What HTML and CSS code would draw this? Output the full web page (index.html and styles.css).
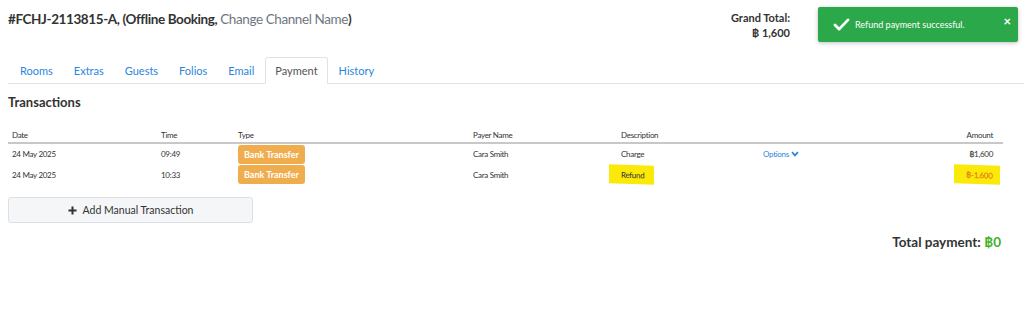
FILE: index.html
```html
<!DOCTYPE html>
<html>
<head>
<meta charset="utf-8">
<link rel="stylesheet" href="styles.css">
</head>
<body>
<div class="page">
  <header class="top">
    <h1 class="title">#FCHJ-2113815-A, (Offline Booking, <span class="channel">Change Channel Name</span>)</h1>
    <div class="grand">
      <div>Grand Total:</div>
      <div>฿ 1,600</div>
    </div>
  </header>

  <ul class="tabs">
    <li><a>Rooms</a></li>
    <li><a>Extras</a></li>
    <li><a>Guests</a></li>
    <li><a>Folios</a></li>
    <li><a>Email</a></li>
    <li class="active"><a>Payment</a></li>
    <li><a>History</a></li>
  </ul>

  <h2 class="section">Transactions</h2>

  <table class="tx">
    <colgroup>
      <col class="c-date"><col class="c-time"><col class="c-type"><col class="c-payer"><col class="c-desc"><col class="c-opt"><col>
    </colgroup>
    <thead>
      <tr><th>Date</th><th>Time</th><th>Type</th><th>Payer Name</th><th>Description</th><th></th><th class="amt">Amount</th></tr>
    </thead>
    <tbody>
      <tr>
        <td>24 May 2025</td><td>09:49</td><td><span class="badge">Bank Transfer</span></td><td>Cara Smith</td><td>Charge</td>
        <td><a class="opts">Options <svg width="8" height="6" viewBox="0 0 8 6"><path d="M1 1.2 L4 4.4 L7 1.2" fill="none" stroke="#2b86e0" stroke-width="1.7"/></svg></a></td>
        <td class="amt">฿1,600</td>
      </tr>
      <tr>
        <td>24 May 2025</td><td>10:33</td><td><span class="badge">Bank Transfer</span></td><td>Cara Smith</td><td><span class="hl hl-desc">Refund</span></td>
        <td></td>
        <td class="amt"><span class="hl hl-amt neg">฿-1,600</span></td>
      </tr>
    </tbody>
  </table>

  <button class="add"><svg width="9" height="9" viewBox="0 0 10 10"><path d="M5 0.5 V9.5 M0.5 5 H9.5" stroke="#333" stroke-width="2.3"/></svg> Add Manual Transaction</button>

  <div class="total">Total payment: <span class="zero">฿0</span></div>
</div>

<div class="toast">
  <svg class="check" width="17" height="13" viewBox="0 0 18 14"><path d="M2 7.5 L6.5 12 L16 2" fill="none" stroke="#fff" stroke-width="3" stroke-linecap="round" stroke-linejoin="round"/></svg>
  <span class="msg">Refund payment successful.</span>
  <span class="close">×</span>
</div>
</body>
</html>
```

FILE: styles.css
```css
* { box-sizing: border-box; }
html, body { margin: 0; padding: 0; background: #fff; }
body {
  font-family: "Lato", "Open Sans", "Liberation Sans", sans-serif;
  color: #333;
  width: 1024px;
  height: 311px;
  overflow: hidden;
  position: relative;
}
.page { padding: 0 0 0 8px; }

.top {
  display: flex;
  justify-content: space-between;
  align-items: flex-start;
  height: 57px;
  padding-right: 234px;
}
.title {
  margin: 11px 0 0;
  font-size: 13.5px;
  line-height: 16px;
  font-weight: 700;
  color: #333;
  letter-spacing: -0.4px;
}
.channel { font-weight: 400; color: #6f7780; }
.grand {
  margin-top: 10px;
  text-align: right;
  font-size: 11px;
  font-weight: 700;
  line-height: 15px;
  color: #333;
}

.tabs {
  list-style: none;
  margin: 0;
  padding: 0 0 0 2px;
  display: flex;
  border-bottom: 1px solid #e3e3e3;
  height: 27px;
}
.tabs li { margin-bottom: -1px; }
.tabs a {
  display: block;
  padding: 0 9px;
  height: 27px;
  line-height: 25px;
  font-size: 11px;
  color: #2b86e0;
  border: 1px solid transparent;
  border-radius: 3px 3px 0 0;
}
.tabs li + li { margin-left: 1px; }
.tabs .active a {
  color: #555;
  background: #fff;
  border-color: #e3e3e3 #e3e3e3 #fff;
}

.section {
  margin: 10px 0 0;
  font-size: 13px;
  font-weight: 700;
  color: #333;
  line-height: 16px;
}

.tx {
  margin-top: 19px;
  width: 995px;
  border-collapse: collapse;
  font-size: 8px;
  letter-spacing: -0.3px;
  color: #333;
}
.c-date { width: 149px; }
.c-time { width: 77px; }
.c-type { width: 235px; }
.c-payer { width: 148px; }
.c-desc { width: 142px; }
.c-opt { width: 150px; }
.tx th {
  text-align: left;
  font-weight: 400;
  padding: 0 4px 2px;
  height: 14px;
  vertical-align: bottom;
  border-bottom: 2px solid #c8c8c8;
}
.tx td {
  padding: 0 4px;
  height: 21px;
  vertical-align: middle;
}
.tx .amt { text-align: right; padding-right: 10px; }
.badge {
  display: inline-block;
  background: #f0ad4e;
  color: #fff;
  font-weight: 700;
  font-size: 9px;
  letter-spacing: 0;
  line-height: 19px;
  padding: 0 6px;
  border-radius: 3px;
}
.opts { color: #2b86e0; }
.hl {
  display: inline-block;
  background: #fbe90a;
  padding: 5px 10px 4px 12px;
  transform: skewY(2deg);
}
.hl-desc { margin-left: -12px; }
.hl-amt { margin-right: -7px; padding-right: 7px; }
.neg { color: #e6641e; }

.add {
  margin-top: 12px;
  width: 245px;
  height: 26px;
  background: #f5f6f8;
  border: 1px solid #dcdfe3;
  border-radius: 3px;
  font-family: inherit;
  font-size: 10.5px;
  color: #333;
  display: flex;
  align-items: center;
  justify-content: center;
  gap: 6px;
}

.total {
  text-align: right;
  padding-right: 23px;
  margin-top: 11px;
  font-size: 13.5px;
  font-weight: 700;
  color: #333;
}
.zero { color: #43b02a; }

.toast {
  position: absolute;
  left: 818px;
  top: 7px;
  width: 200px;
  height: 35px;
  background: #2aa84a;
  box-shadow: 0 1px 4px rgba(0,0,0,0.25);
  border-radius: 2px;
  color: #fff;
  display: flex;
  align-items: center;
  padding: 0 7px 0 15px;
}
.check { flex: none; }
.msg { font-size: 9px; margin-left: 5px; flex: 1; white-space: nowrap; }
.close { font-size: 13px; font-weight: 700; margin-top: -8px; }
```
